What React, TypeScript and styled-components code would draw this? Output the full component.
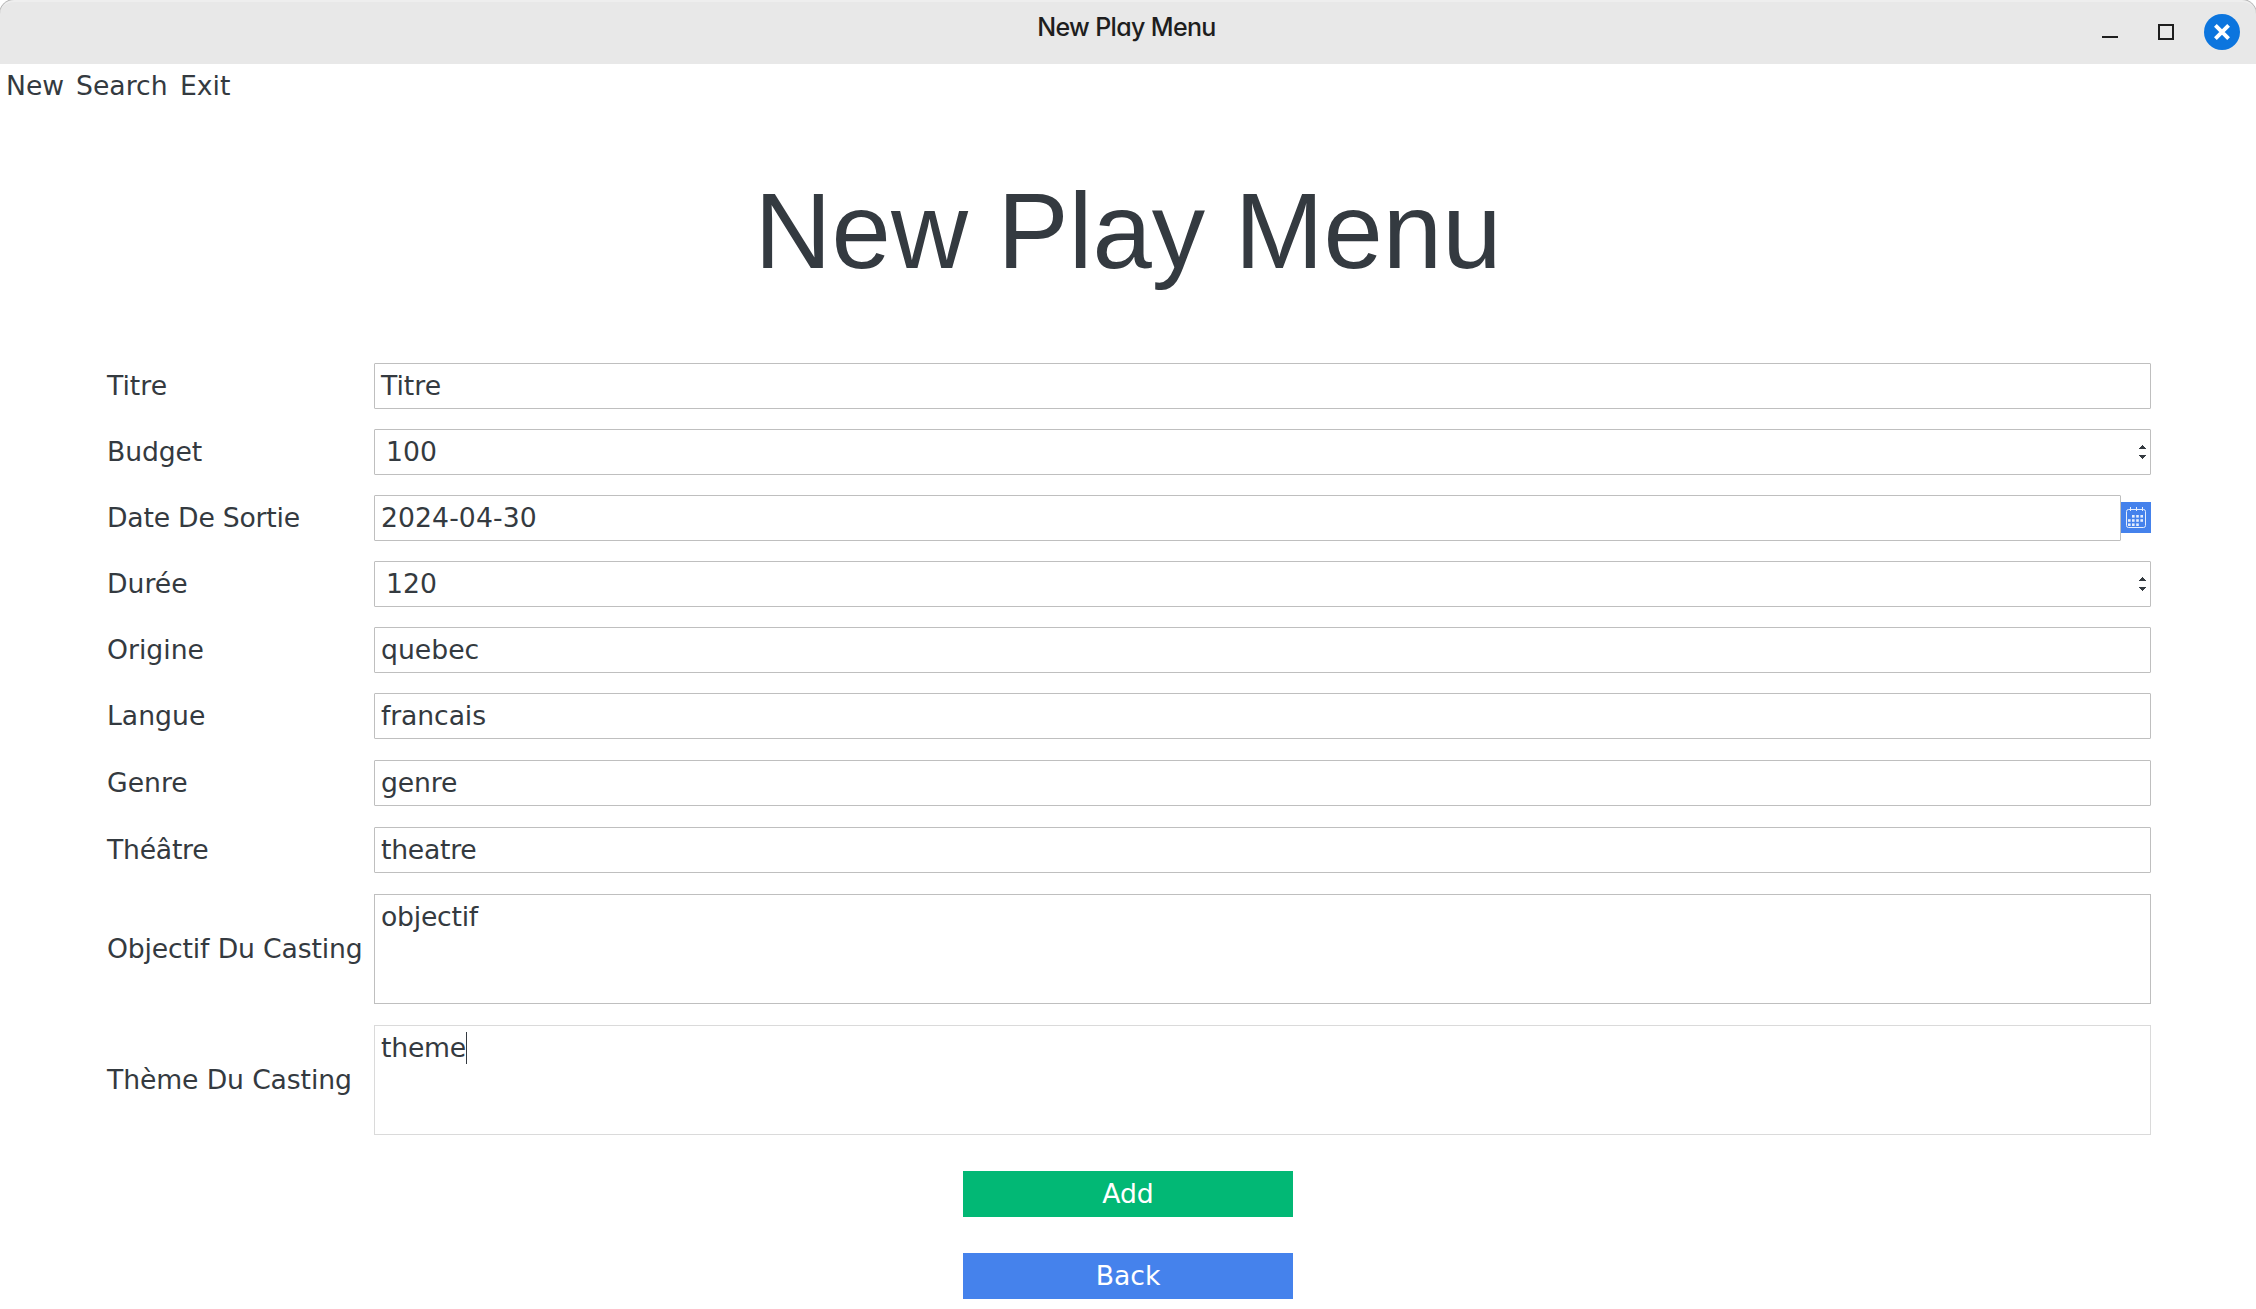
import React from "react";
import styled, { createGlobalStyle } from "styled-components";

const GlobalStyle = createGlobalStyle`
  *, *::before, *::after { box-sizing: border-box; }
  html, body { margin: 0; padding: 0; background: #ffffff; }
  body { overflow: hidden; }
`;

const Window = styled.main`
  display: flex;
  flex-direction: column;
  width: 2256px;
  height: 1309px;
  background: #ffffff;
  color: #343a40;
  font-family: "DejaVu Sans", sans-serif;
  font-size: 26.67px;
`;

const TitleBar = styled.header`
  display: grid;
  grid-template-columns: 1fr auto 1fr;
  flex: none;
  height: 64px;
  background: #e8e8e8;
  border-top: 2px solid #eeeeee;
  border-radius: 14px 14px 0 0;
  box-shadow: 0 0 0 1px #b4b4b4;
  clip-path: inset(0);
`;

const WindowTitle = styled.div`
  grid-column: 2;
  padding-right: 3px;
  font-family: Inter, sans-serif;
  font-feature-settings: "cv11";
  font-size: 25px;
  font-weight: 500;
  line-height: 50px;
  letter-spacing: -0.65px;
  color: #1e1e1e;
  white-space: nowrap;
`;

const Controls = styled.div`
  display: flex;
  justify-content: flex-end;
  padding: 12px 16px 0 0;
`;

const MenuBar = styled.nav`
  display: flex;
  flex: none;
  height: 43px;
  padding-left: 6px;
  line-height: 43px;
`;

const MenuItem = styled.span<{ $width: number }>`
  width: ${(p) => p.$width}px;
  white-space: nowrap;
`;

const Heading = styled.h1`
  flex: none;
  margin: 64px 0 0;
  height: 120px;
  line-height: 120px;
  font-family: "Liberation Sans", Arial, sans-serif;
  font-size: 106.67px;
  font-weight: 400;
  text-align: center;
`;

const Form = styled.form`
  display: flex;
  flex-direction: column;
  flex: none;
  padding: 72px 105px 0 107px;
`;

const Row = styled.div<{ $gap: number }>`
  display: grid;
  grid-template-columns: 267px 1fr;
  align-items: center;
  margin-bottom: ${(p) => p.$gap}px;
`;

const Label = styled.label<{ $tracking?: number }>`
  line-height: 46px;
  letter-spacing: ${(p) => p.$tracking ?? 0}px;
  white-space: nowrap;
`;

const Value = styled.span<{ $tracking?: number }>`
  letter-spacing: ${(p) => p.$tracking ?? 0}px;
`;

const Control = styled.div`
  display: flex;
  align-items: center;
`;

const Field = styled.div<{ $indent?: number }>`
  display: flex;
  flex: 1;
  align-items: center;
  justify-content: space-between;
  height: 46px;
  padding: 0 4px 0 ${(p) => p.$indent ?? 6}px;
  line-height: 44px;
  border: 1px solid #bfbfbf;
  border-radius: 1px;
`;

const Area = styled.div<{ $focused?: boolean }>`
  display: flex;
  flex: 1;
  height: 110px;
  padding-left: 6px;
  line-height: 44px;
  border: 1px solid ${(p) => (p.$focused ? "#dadada" : "#bfbfbf")};
`;

const Caret = styled.span`
  width: 1px;
  height: 32px;
  margin-top: 6px;
  background: #343a40;
`;

const DateButton = styled.span`
  display: flex;
  width: 30px;
  height: 31px;
  margin-bottom: 1px;
  background: #4582ec;
`;

const Buttons = styled.div`
  display: flex;
  flex-direction: column;
  align-items: center;
  gap: 36px;
  padding-top: 36px;
`;

const Button = styled.div<{ $color: string }>`
  width: 330px;
  height: 46px;
  line-height: 45px;
  text-align: center;
  color: #ffffff;
  background: ${(p) => p.$color};
`;

const Arrows = () => (
  <svg width="7" height="14" viewBox="0 0 7 14" fill="#343a40" shapeRendering="crispEdges">
    <path d="M3 0h1v1h1v1h1v1h1v1H0V3h1V2h1V1h1z" />
    <path d="M0 10h7v1H6v1H5v1H4v1H3v-1H2v-1H1v-1H0z" />
  </svg>
);

const dots = [
  [12.3, 14.3], [16.5, 14.3], [20.7, 14.3],
  [8.3, 18.5], [12.3, 18.5], [16.5, 18.5], [20.7, 18.5],
  [8.3, 22.7], [12.3, 22.7], [16.5, 22.7],
];

const CalendarIcon = () => (
  <svg width="30" height="31" viewBox="0 0 30 31" fill="none" stroke="#e6eefc">
    <rect x="5.5" y="7.5" width="19" height="18" rx="2" />
    <path d="M9.5 5v4M15.5 5v4M21.5 5v4" />
    <g fill="#e6eefc" stroke="none">
      {dots.map(([x, y]) => (
        <rect key={`${x}-${y}`} x={x - 1.3} y={y - 1.3} width="2.6" height="2.6" />
      ))}
    </g>
  </svg>
);

const WindowButtons = () => (
  <svg width="140" height="36" viewBox="0 0 140 36">
    <path d="M2 22h16v2H2z" fill="#1e1e1e" />
    <path d="M59 11h14v14H59z" fill="none" stroke="#1e1e1e" strokeWidth="2" />
    <circle cx="122" cy="18" r="18" fill="#0c75de" />
    <path d="M115.400 11.400l13.200 13.200M128.600 11.400l-13.200 13.200" stroke="#ffffff" strokeWidth="3.900" />
  </svg>
);

type Entry = {
  label: string;
  value: string;
  kind?: "spin" | "date" | "area";
  focused?: boolean;
  gap: number;
  labelTracking?: number;
  valueTracking?: number;
};

const entries: Entry[] = [
  { label: "Titre", value: "Titre", gap: 20 },
  { label: "Budget", value: "100", kind: "spin", gap: 20, labelTracking: -0.15 },
  {
    label: "Date De Sortie",
    value: "2024-04-30",
    kind: "date",
    gap: 20,
    labelTracking: -0.22,
    valueTracking: 0.08,
  },
  { label: "Durée", value: "120", kind: "spin", gap: 20 },
  { label: "Origine", value: "quebec", gap: 20 },
  { label: "Langue", value: "francais", gap: 21, valueTracking: -0.12 },
  { label: "Genre", value: "genre", gap: 21, valueTracking: -0.12 },
  { label: "Théâtre", value: "theatre", gap: 21, labelTracking: -0.25, valueTracking: -0.27 },
  {
    label: "Objectif Du Casting",
    value: "objectif",
    kind: "area",
    gap: 21,
    labelTracking: -0.16,
    valueTracking: -0.25,
  },
  {
    label: "Thème Du Casting",
    value: "theme",
    kind: "area",
    focused: true,
    gap: 0,
    labelTracking: -0.13,
    valueTracking: -0.23,
  },
];

const EntryControl = ({ entry }: { entry: Entry }) => {
  if (entry.kind === "area") {
    return (
      <Area $focused={entry.focused}>
        <Value $tracking={entry.valueTracking}>{entry.value}</Value>
        {entry.focused && <Caret />}
      </Area>
    );
  }
  return (
    <Control>
      <Field $indent={entry.kind === "spin" ? 11 : 6}>
        <Value $tracking={entry.valueTracking}>{entry.value}</Value>
        {entry.kind === "spin" && <Arrows />}
      </Field>
      {entry.kind === "date" && (
        <DateButton>
          <CalendarIcon />
        </DateButton>
      )}
    </Control>
  );
};

export default function App() {
  return (
    <Window>
      <GlobalStyle />
      <TitleBar>
        <WindowTitle>New Play Menu</WindowTitle>
        <Controls>
          <WindowButtons />
        </Controls>
      </TitleBar>
      <MenuBar>
        <MenuItem $width={70}>New</MenuItem>
        <MenuItem $width={104}>Search</MenuItem>
        <MenuItem $width={60}>Exit</MenuItem>
      </MenuBar>
      <Heading>New Play Menu</Heading>
      <Form>
        {entries.map((entry) => (
          <Row key={entry.label} $gap={entry.gap}>
            <Label $tracking={entry.labelTracking}>{entry.label}</Label>
            <EntryControl entry={entry} />
          </Row>
        ))}
      </Form>
      <Buttons>
        <Button $color="#02b875">Add</Button>
        <Button $color="#4582ec">Back</Button>
      </Buttons>
    </Window>
  );
}
